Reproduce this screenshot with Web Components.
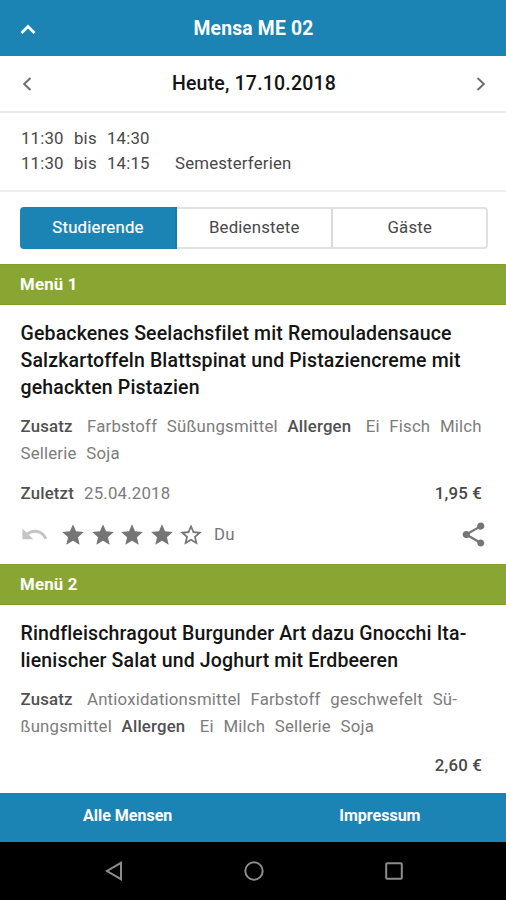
<!DOCTYPE html>
<html lang="de"><head><meta charset="utf-8"><title>Mensa ME 02</title>
<style>
body{margin:0;background:#fff;font-family:Roboto,"Liberation Sans",sans-serif;font-size:16.8px;letter-spacing:.19px;color:#484848}
</style></head><body>
<mensa-app></mensa-app>
<script>
const define=(name,html)=>{
  const t=document.createElement('template');t.innerHTML=html;
  customElements.define(name,class extends HTMLElement{
    constructor(){super();this.attachShadow({mode:'open'}).append(t.content.cloneNode(true));}
  });
};
const ICONS={
  up:[16,12,'<path d="M1.5 10 8 3.5 14.500 10" fill="none" stroke="currentColor" stroke-width="2.700"/>'],
  left:[10,16,'<path d="M8.500 2 2.200 8l6.300 6" fill="none" stroke="currentColor" stroke-width="2"/>'],
  right:[10,16,'<path d="M1.500 2 7.800 8l-6.300 6" fill="none" stroke="currentColor" stroke-width="2"/>'],
  undo:[24,24,'<path fill="currentColor" d="M12.500 8c-2.650 0-5.050.99-6.900 2.600L2 7v9h9l-3.620-3.620c1.390-1.160 3.160-1.880 5.120-1.880 3.540 0 6.550 2.310 7.600 5.500l2.370-.78C21.080 11.030 17.150 8 12.500 8z"/>'],
  star:[24,24,'<path fill="currentColor" d="M12 17.270 18.180 21l-1.640-7.030L22 9.240l-7.190-.61L12 2 9.190 8.630 2 9.240l5.460 4.730L5.820 21z"/>'],
  'star-o':[24,24,'<path fill="currentColor" d="m22 9.240-7.190-.62L12 2 9.190 8.630 2 9.240l5.460 4.730L5.820 21 12 17.270 18.180 21l-1.630-7.030L22 9.240zM12 15.400l-3.760 2.270 1-4.280-3.320-2.880 4.380-.38L12 6.100l1.710 4.040 4.380.38-3.320 2.880 1 4.280L12 15.400z"/>'],
  share:[24,24,'<path fill="currentColor" d="M18 16.080c-.76 0-1.440.3-1.960.77L8.910 12.700c.05-.23.09-.46.09-.7s-.04-.47-.09-.7l7.050-4.110c.54.5 1.250.81 2.040.81 1.660 0 3-1.340 3-3s-1.340-3-3-3-3 1.340-3 3c0 .24.04.47.09.7L8.040 9.810C7.500 9.310 6.790 9 6 9c-1.660 0-3 1.340-3 3s1.340 3 3 3c.79 0 1.500-.31 2.040-.81l7.120 4.160c-.05.21-.08.43-.08.65 0 1.610 1.310 2.920 2.920 2.920s2.920-1.310 2.920-2.920-1.310-2.920-2.920-2.920z"/>'],
  back:[18,20,'<path d="M16 1.800v16.400L2 10z" fill="none" stroke="currentColor" stroke-width="2"/>'],
  home:[20,20,'<circle cx="10" cy="10" r="8.700" fill="none" stroke="currentColor" stroke-width="2"/>'],
  recent:[18,18,'<rect x="1.200" y="1.200" width="15.600" height="15.600" rx="1" fill="none" stroke="currentColor" stroke-width="2"/>']
};
customElements.define('m-icon',class extends HTMLElement{
  constructor(){super();this.attachShadow({mode:'open'});}
  connectedCallback(){
    const [w,h,p]=ICONS[this.getAttribute('name')],s=+(this.getAttribute('size')||w);
    this.shadowRoot.innerHTML=`<style>:host{display:block;flex:none}svg{display:block}</style><svg width="${s}" height="${s*h/w}" viewBox="0 0 ${w} ${h}">${p}</svg>`;
  }
});
define('m-header',`<style>:host{display:grid;grid-template-columns:36px 1fr 36px;align-items:center;height:56px;padding:0 19px 0 20px;box-sizing:border-box;background:#1b84b5;color:#fff;font-size:19.300px;font-weight:700;letter-spacing:.2px;text-align:center}
m-icon{margin-top:2px}</style><m-icon name="up"></m-icon><span><slot></slot></span>`);
define('m-date',`<style>:host{display:flex;align-items:center;justify-content:space-between;height:57px;padding:0 20px 0 22px;box-sizing:border-box;border-bottom:2px solid #e8e8e8;color:#141414;font-size:19.500px;font-weight:500;letter-spacing:.2px}
m-icon{color:#707070}</style><m-icon name="left"></m-icon><span><slot></slot></span><m-icon name="right"></m-icon>`);
define('m-hours',`<style>:host{display:grid;grid-template-columns:53px 33px 68px 1fr;grid-auto-rows:25px;height:79px;padding:13px 21px 0;box-sizing:border-box;border-bottom:2px solid #eee;line-height:25px;color:#484848}</style><slot></slot>`);
define('m-tabs',`<style>:host{display:flex;height:42px;margin:15px 18px 15px 20px;border:2px solid #e2e2e2;box-sizing:border-box;border-radius:4px}
::slotted(m-tab:not(:last-child)){border-right:2px solid #dadada}</style><slot></slot>`);
define('m-tab',`<style>:host{flex:1 1 0;display:flex;align-items:center;justify-content:center;box-sizing:border-box;padding:0 0 2px 1px;color:#484848}
:host([active]){flex:0 0 157px;background:#1b84b5;color:#fff;margin:-2px 0 -2px -2px;border-radius:4px 0 0 4px;border-right-color:#1878a8!important;-webkit-text-stroke:.2px #fff}</style><slot></slot>`);
define('m-bar',`<style>:host{display:flex;align-items:center;height:41px;padding:0 20px 1px;box-sizing:border-box;background:#8aa632;box-shadow:inset 0 1px #7f9d22,inset 0 -1px #7f9d22;color:#fff;font-weight:700}</style><slot></slot>`);
define('m-dish',`<style>:host{display:block;padding:15px 20px 0 20.500px;box-sizing:border-box}
.t{font-size:19.500px;font-weight:500;line-height:27px;letter-spacing:.150px;color:#141414;white-space:nowrap}
.i{margin-top:12px;line-height:27px;word-spacing:5.300px;color:#7c7c7c;white-space:nowrap}
</style><div class="t"><slot name="title"></slot></div><div class="i"><slot name="info"></slot></div><slot></slot>`);
define('m-label',`<style>:host{font-weight:500;color:#505050;margin-right:4.700px}</style><slot></slot>`);
define('m-price',`<style>:host{display:flex;justify-content:space-between;line-height:24px;padding-right:4px;color:#7c7c7c}
b{font-weight:500;color:#484848}span{word-spacing:1px}</style><span><slot></slot></span><b><slot name="price"></slot></b>`);
define('m-rating',`<style>:host{display:flex;align-items:center;height:30px;margin-top:14.500px;color:#757575}
.undo{color:#c4c4c4;margin:0 11.500px 0 -1px}.s{display:flex;gap:3.500px;margin-right:10px}.share{margin-left:auto;margin-right:-1.500px}span{margin-top:-1px}</style>
<m-icon class="undo" name="undo" size="29"></m-icon><div class="s"><m-icon name="star" size="26"></m-icon><m-icon name="star" size="26"></m-icon><m-icon name="star" size="26"></m-icon><m-icon name="star" size="26"></m-icon><m-icon name="star-o" size="26"></m-icon></div><span><slot></slot></span><m-icon class="share" name="share" size="29"></m-icon>`);
define('m-footer',`<style>:host{display:grid;grid-template-columns:1fr 1fr;height:49px;padding:0 0 4px 1.500px;box-sizing:border-box;align-items:center;text-align:center;background:#1b84b5;color:#fff;font-size:16px;font-weight:700;letter-spacing:0}</style><slot></slot>`);
define('m-nav',`<style>:host{display:grid;grid-template-columns:104.500px 1fr 103.500px;height:58px;align-items:center;background:#000;color:#8c8c8c}
div{grid-column:2;display:flex;justify-content:space-between;align-items:center}</style><div><m-icon name="back"></m-icon><m-icon name="home"></m-icon><m-icon name="recent"></m-icon></div>`);
define('mensa-app',`<style>:host{display:flex;flex-direction:column;width:506px;height:900px;overflow:hidden;background:#fff}
:host>*{flex:none}.one{height:259px}.two{flex:1}.p1{margin-top:14px}.p2{margin-top:13px}</style>
<m-header>Mensa ME 02</m-header>
<m-date>Heute, 17.10.2018</m-date>
<m-hours><span>11:30</span><span>bis</span><span>14:30</span><span></span><span>11:30</span><span>bis</span><span>14:15</span><span>Semesterferien</span></m-hours>
<m-tabs><m-tab active>Studierende</m-tab><m-tab>Bedienstete</m-tab><m-tab>Gäste</m-tab></m-tabs>
<m-bar>Menü 1</m-bar>
<m-dish class="one"><span slot="title">Gebackenes Seelachsfilet mit Remouladensauce<br>Salzkartoffeln Blattspinat und Pistaziencreme mit<br>gehackten Pistazien</span>
<span slot="info"><m-label>Zusatz</m-label> Farbstoff Süßungsmittel <m-label>Allergen</m-label> Ei Fisch Milch<br>Sellerie Soja</span>
<m-price class="p1"><m-label>Zuletzt</m-label> 25.04.2018<span slot="price">1,95 €</span></m-price>
<m-rating>Du</m-rating></m-dish>
<m-bar>Menü 2</m-bar>
<m-dish class="two"><span slot="title">Rindfleischragout Burgunder Art dazu Gnocchi Ita-<br>lienischer Salat und Joghurt mit Erdbeeren</span>
<span slot="info"><m-label>Zusatz</m-label> Antioxidationsmittel Farbstoff geschwefelt Sü-<br>ßungsmittel <m-label>Allergen</m-label> Ei Milch Sellerie Soja</span>
<m-price class="p2"><span slot="price">2,60 €</span></m-price></m-dish>
<m-footer><span>Alle Mensen</span><span>Impressum</span></m-footer>
<m-nav></m-nav>`);
</script></body></html>
